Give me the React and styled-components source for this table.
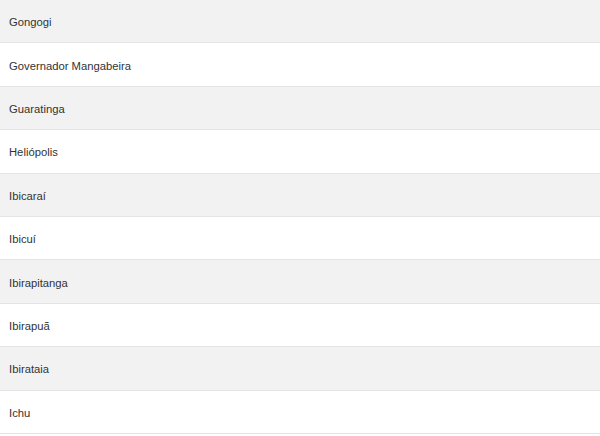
import React from "react";
import styled, { createGlobalStyle } from "styled-components";

const GlobalStyle = createGlobalStyle`
  body {
    margin: 0;
    background: #fff;
    font-family: "Liberation Sans", Arial, sans-serif;
  }
`;

const List = styled.div`
  display: flex;
  flex-direction: column;
  width: 600px;
`;

const Row = styled.div`
  box-sizing: border-box;
  height: 43.4px;
  display: flex;
  align-items: center;
  padding: 2px 9px 0;
  font-size: 11.25px;
  color: #333;
  background: ${(p) => (p.$odd ? "#f2f2f2" : "#fff")};
  border-bottom: 1px solid #e4e4e4;
`;

const cities = [
  "Gongogi",
  "Governador Mangabeira",
  "Guaratinga",
  "Heliópolis",
  "Ibicaraí",
  "Ibicuí",
  "Ibirapitanga",
  "Ibirapuã",
  "Ibirataia",
  "Ichu",
];

export default function App() {
  return (
    <>
      <GlobalStyle />
      <List>
        {cities.map((c, i) => (
          <Row key={c} $odd={i % 2 === 0}>
            {c}
          </Row>
        ))}
      </List>
    </>
  );
}
